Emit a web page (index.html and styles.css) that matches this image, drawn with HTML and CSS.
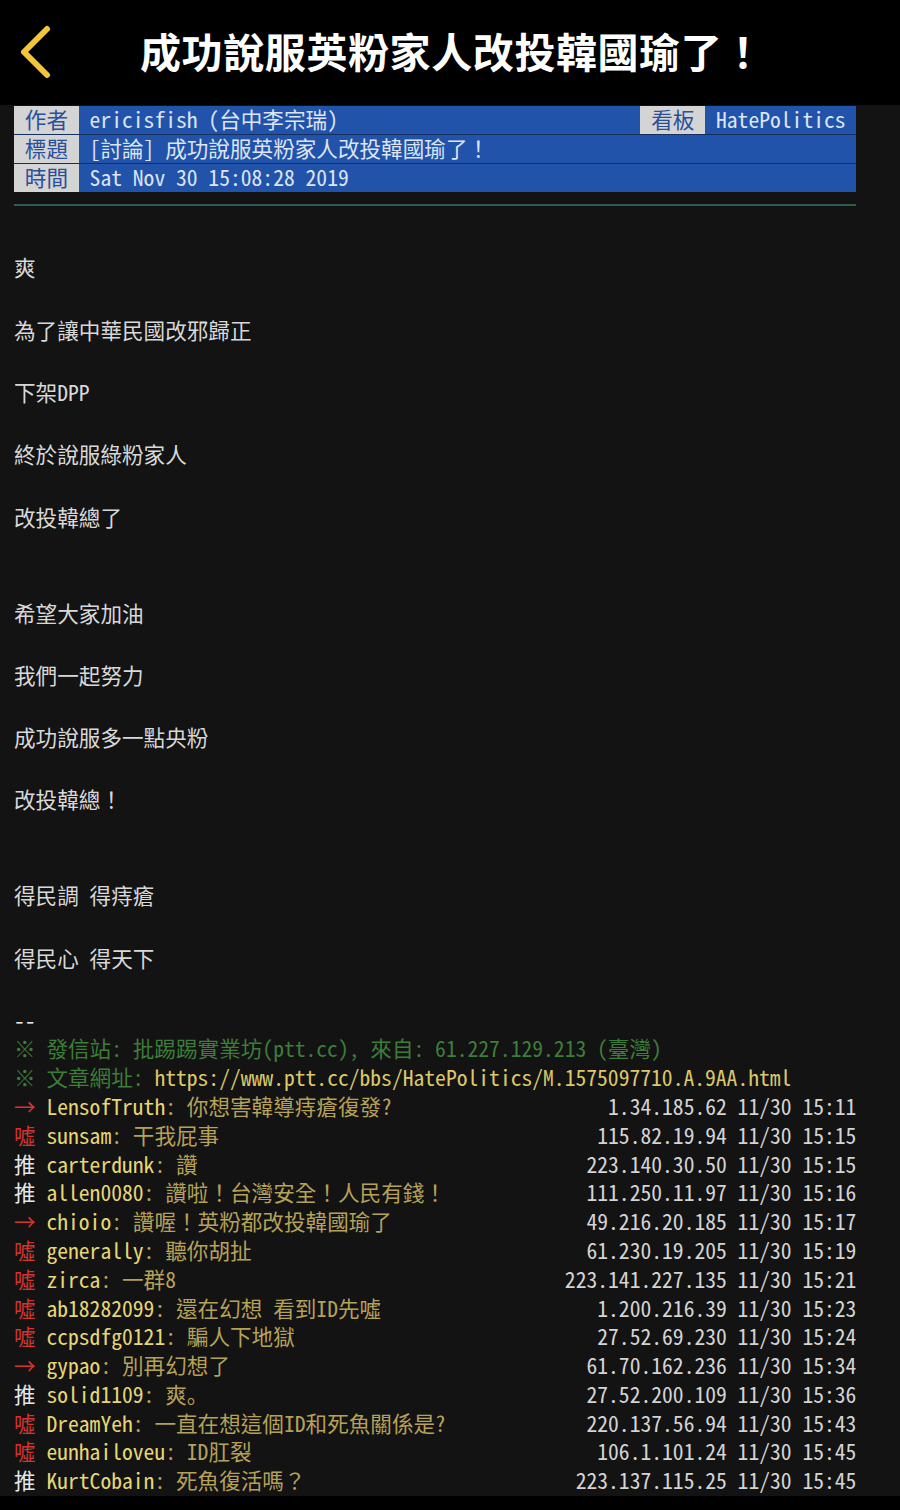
FILE: index.html
```html
<!DOCTYPE html>
<html lang="zh-Hant">
<head>
<meta charset="utf-8">
<title>成功說服英粉家人改投韓國瑜了！</title>
<link rel="stylesheet" href="styles.css">
</head>
<body>
<header class="topbar">
  <svg class="back" width="40" height="56" viewBox="0 0 40 56" aria-hidden="true">
    <polyline points="34,5 11,28 34,51" fill="none" stroke="#f2c63a" stroke-width="6" stroke-linecap="round" stroke-linejoin="round"/>
  </svg>
  <h1 class="title">成功說服英粉家人改投韓國瑜了！</h1>
</header>
<main class="term">
  <div class="meta">
    <div class="mrow"><span class="lbl">作者</span><span class="val grow">ericisfish (台中李宗瑞)</span><span class="lbl">看板</span><span class="val">HatePolitics</span></div>
    <div class="mrow"><span class="lbl">標題</span><span class="val grow">[討論] 成功說服英粉家人改投韓國瑜了！</span></div>
    <div class="mrow"><span class="lbl">時間</span><span class="val grow">Sat Nov 30 15:08:28 2019</span></div>
  </div>
  <div class="rule"></div>
  <div class="body">
    <div class="ln">爽</div>
    <div class="ln">為了讓中華民國改邪歸正</div>
    <div class="ln">下架DPP</div>
    <div class="ln">終於說服綠粉家人</div>
    <div class="ln">改投韓總了</div>
    <div class="gap"></div>
    <div class="ln">希望大家加油</div>
    <div class="ln">我們一起努力</div>
    <div class="ln">成功說服多一點央粉</div>
    <div class="ln">改投韓總！</div>
    <div class="gap"></div>
    <div class="ln">得民調 得痔瘡</div>
    <div class="ln">得民心 得天下</div>
  </div>
  <div class="sig">
    <div class="sl w">--</div>
    <div class="sl g">※ 發信站: 批踢踢實業坊(ptt.cc), 來自: 61.227.129.213 (臺灣)</div>
    <div class="sl"><span class="g">※ 文章網址: </span><span class="u">https://www.ptt.cc/bbs/HatePolitics/M.1575097710.A.9AA.html</span></div>
    <div class="sl cm"><span><span class="r">→ </span><span class="y">LensofTruth</span><span class="c">: 你想害韓導痔瘡復發?</span></span><span class="ip">1.34.185.62 11/30 15:11</span></div>
    <div class="sl cm"><span><span class="r">噓 </span><span class="y">sunsam</span><span class="c">: 干我屁事</span></span><span class="ip">115.82.19.94 11/30 15:15</span></div>
    <div class="sl cm"><span><span class="w">推 </span><span class="y">carterdunk</span><span class="c">: 讚</span></span><span class="ip">223.140.30.50 11/30 15:15</span></div>
    <div class="sl cm"><span><span class="w">推 </span><span class="y">allen0080</span><span class="c">: 讚啦！台灣安全！人民有錢！</span></span><span class="ip">111.250.11.97 11/30 15:16</span></div>
    <div class="sl cm"><span><span class="r">→ </span><span class="y">chioio</span><span class="c">: 讚喔！英粉都改投韓國瑜了</span></span><span class="ip">49.216.20.185 11/30 15:17</span></div>
    <div class="sl cm"><span><span class="r">噓 </span><span class="y">generally</span><span class="c">: 聽你胡扯</span></span><span class="ip">61.230.19.205 11/30 15:19</span></div>
    <div class="sl cm"><span><span class="r">噓 </span><span class="y">zirca</span><span class="c">: 一群8</span></span><span class="ip">223.141.227.135 11/30 15:21</span></div>
    <div class="sl cm"><span><span class="r">噓 </span><span class="y">ab18282099</span><span class="c">: 還在幻想 看到ID先噓</span></span><span class="ip">1.200.216.39 11/30 15:23</span></div>
    <div class="sl cm"><span><span class="r">噓 </span><span class="y">ccpsdfg0121</span><span class="c">: 騙人下地獄</span></span><span class="ip">27.52.69.230 11/30 15:24</span></div>
    <div class="sl cm"><span><span class="r">→ </span><span class="y">gypao</span><span class="c">: 別再幻想了</span></span><span class="ip">61.70.162.236 11/30 15:34</span></div>
    <div class="sl cm"><span><span class="w">推 </span><span class="y">solid1109</span><span class="c">: 爽<span class="jp" lang="ja">。</span></span></span><span class="ip">27.52.200.109 11/30 15:36</span></div>
    <div class="sl cm"><span><span class="r">噓 </span><span class="y">DreamYeh</span><span class="c">: 一直在想這個ID和死魚關係是?</span></span><span class="ip">220.137.56.94 11/30 15:43</span></div>
    <div class="sl cm"><span><span class="r">噓 </span><span class="y">eunhailoveu</span><span class="c">: ID肛裂</span></span><span class="ip">106.1.101.24 11/30 15:45</span></div>
    <div class="sl cm"><span><span class="w">推 </span><span class="y">KurtCobain</span><span class="c">: 死魚復活嗎？</span></span><span class="ip">223.137.115.25 11/30 15:45</span></div>
  </div>
</main>
</body>
</html>
```
FILE: styles.css
```css
html, body {
  margin: 0;
  padding: 0;
  background: #000;
}
body {
  width: 900px;
  height: 1510px;
  overflow: hidden;
}
.topbar {
  height: 105px;
  background: #000;
  display: flex;
  align-items: center;
  padding-left: 13px;
  box-sizing: border-box;
}
.back {
  display: block;
  margin-top: -2px;
}
.title {
  margin: -4px 0 0 87px;
  font-family: "Noto Sans CJK TC", "Noto Sans CJK SC", sans-serif;
  font-weight: 700;
  font-size: 41px;
  line-height: 1;
  color: #fff;
  letter-spacing: 0.6px;
}
.term {
  background: #131313;
  padding: 1px 0 0 14px;
  height: 1391.4px;
  box-sizing: border-box;
  font-family: "Noto Sans Mono CJK TC", "Noto Sans CJK TC", "DejaVu Sans Mono", monospace;
  font-size: 21.6px;
  color: #d6d6d6;
}
.meta {
  width: 842.4px;
}
.mrow {
  display: flex;
  height: 28.8px;
  line-height: 26px;
  border-bottom: 1px solid #16305e;
  box-sizing: border-box;
}
.mrow:last-child {
  border-bottom: none;
}
.lbl, .val, .ln, .sl, .sl span {
  white-space: pre;
}
.lbl {
  background: #d4d4d4;
  color: #2b4f9b;
  padding: 0 10.8px;
}
.val {
  background: #2253ab;
  color: #dde4f2;
  padding: 0 10.8px;
}
.grow {
  flex: 1;
}
.rule {
  width: 842.4px;
  height: 2px;
  background: #2c5c57;
  margin-top: 12px;
}
.body {
  padding-top: 30px;
  color: #d8d8d8;
}
.ln {
  height: 62.3px;
  line-height: 62.3px;
}
.gap {
  height: 33.7px;
}
.sig {
  margin-top: 16.5px;
}
.sl {
  height: 28.8px;
  line-height: 28.8px;
  width: 842.4px;
}
.cm {
  display: flex;
  justify-content: space-between;
}
.jp {
  font-family: "Noto Sans Mono CJK JP", "Noto Sans CJK JP", monospace;
}
.w { color: #e6e6e6; }
.g { color: #3d7d3a; }
.u { color: #dcc868; }
.r { color: #d0352f; }
.y { color: #e6d774; }
.c { color: #b6a158; }
.ip { color: #d4d4d4; }
```
